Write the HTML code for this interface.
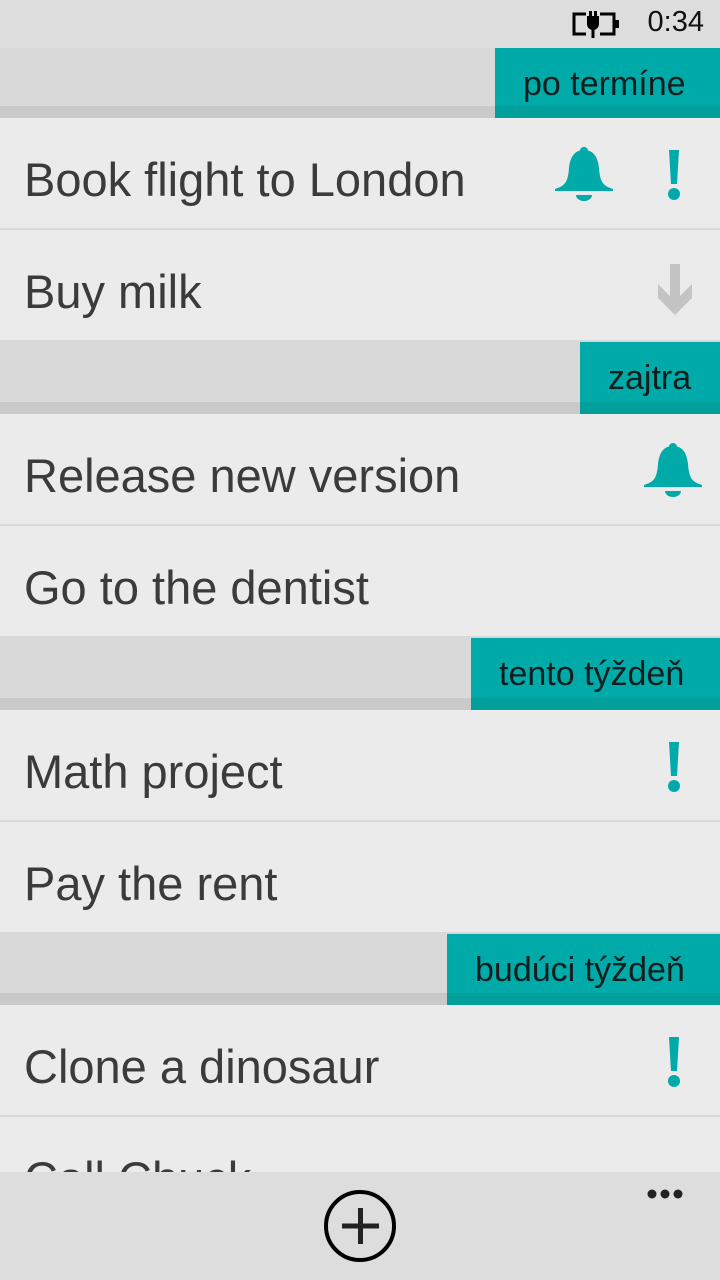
<!DOCTYPE html>
<html style="overflow:hidden;height:1280px"><head><style>
body{margin:0;width:720px;height:1280px;background:#ebebeb;position:relative;overflow:hidden;font-family:"Liberation Sans",sans-serif}
.sb{position:absolute;left:0;top:0;width:720px;height:48px;background:#dddddd}
.time{position:absolute;right:16px;top:6px;font-size:29px;color:#111}
.hdr{position:absolute;left:0;width:720px;height:72px;background:#d9d9d9}
.hdr:after{content:"";position:absolute;left:0;bottom:0;width:100%;height:12px;background:#c9c9c9}
.tag{position:absolute;right:0;top:0;height:72px;background:#00aaa8;z-index:1;color:#0e1e1e;font-size:34px;box-sizing:border-box;padding:17px 0 0 28px;white-space:nowrap}
.tag:after{content:"";position:absolute;left:0;bottom:0;width:100%;height:12px;background:#009f9a}
.it{position:absolute;left:0;width:720px;height:112px;border-bottom:2px solid #d8d8d8;box-sizing:border-box}
.it span{position:absolute;left:24px;top:34px;font-size:47px;color:#3b3b3b;white-space:nowrap}
.bar{position:absolute;left:0;top:1172px;width:720px;height:108px;background:#dddddd}
svg{position:absolute}
</style></head><body>
<div class="sb"><svg style="left:572px;top:10px" width="50" height="28" viewBox="0 0 50 28"><rect x="2" y="4" width="40" height="20" fill="none" stroke="#000" stroke-width="3"/><rect x="43" y="10" width="4" height="8" fill="#000"/><rect x="14" y="0" width="14" height="28" fill="#dddddd"/><path d="M15 6h12v8a6 6 0 0 1-12 0z" fill="#000"/><rect x="17" y="1" width="3" height="6" fill="#000"/><rect x="22" y="1" width="3" height="6" fill="#000"/><rect x="19.5" y="18" width="3" height="10" fill="#000"/></svg><div class="time">0:34</div></div>

<div class="hdr" style="top:48px;height:70px"><div class="tag" style="width:225px;height:70px">po termíne</div></div>
<div class="it" style="top:118px"><span>Book flight to London</span>
<svg style="left:554px;top:28px" width="60" height="60" viewBox="0 0 60 60"><circle cx="30" cy="5" r="4" fill="#00aaa8"/><path d="M30 4c-10 0-14 8-15 18-1 14-4 18-14 21v2h58v-2c-10-3-13-7-14-21C44 12 40 4 30 4z" fill="#00aaa8"/><path d="M22 49h16a8 6 0 0 1-16 0z" fill="#00aaa8"/></svg>
<svg style="left:664px;top:32px" width="20" height="54" viewBox="0 0 20 54"><path d="M5 0h10l-2 34h-6z" fill="#00aaa8"/><circle cx="10" cy="44" r="6" fill="#00aaa8"/></svg></div>
<div class="it" style="top:230px"><span>Buy milk</span>
<svg style="left:656px;top:34px" width="38" height="52" viewBox="0 0 38 52"><path d="M14 0h10v32l12-12v14L19 51 2 34V20l12 12z" fill="#c4c4c4"/></svg></div>

<div class="hdr" style="top:342px"><div class="tag" style="width:140px">zajtra</div></div>
<div class="it" style="top:414px"><span>Release new version</span>
<svg style="left:643px;top:28px" width="60" height="60" viewBox="0 0 60 60"><circle cx="30" cy="5" r="4" fill="#00aaa8"/><path d="M30 4c-10 0-14 8-15 18-1 14-4 18-14 21v2h58v-2c-10-3-13-7-14-21C44 12 40 4 30 4z" fill="#00aaa8"/><path d="M22 49h16a8 6 0 0 1-16 0z" fill="#00aaa8"/></svg></div>
<div class="it" style="top:526px"><span>Go to the dentist</span></div>

<div class="hdr" style="top:638px"><div class="tag" style="width:249px">tento týždeň</div></div>
<div class="it" style="top:710px"><span>Math project</span>
<svg style="left:664px;top:32px" width="20" height="54" viewBox="0 0 20 54"><path d="M5 0h10l-2 34h-6z" fill="#00aaa8"/><circle cx="10" cy="44" r="6" fill="#00aaa8"/></svg></div>
<div class="it" style="top:822px"><span>Pay the rent</span></div>

<div class="hdr" style="top:934px;height:71px"><div class="tag" style="width:273px;height:71px">budúci týždeň</div></div>
<div class="it" style="top:1005px"><span>Clone a dinosaur</span>
<svg style="left:664px;top:32px" width="20" height="54" viewBox="0 0 20 54"><path d="M5 0h10l-2 34h-6z" fill="#00aaa8"/><circle cx="10" cy="44" r="6" fill="#00aaa8"/></svg></div>
<div class="it" style="top:1117px;border:none"><span>Call Chuck</span></div>

<div class="bar">
<svg style="left:322px;top:18px" width="76" height="76" viewBox="0 0 76 76"><ellipse cx="38" cy="36" rx="34" ry="34" fill="none" stroke="#000" stroke-width="4"/><rect x="36" y="18" width="5" height="36" fill="#222"/><rect x="20" y="33.5" width="37" height="5" fill="#222"/></svg>
<svg style="left:644px;top:14px" width="44" height="16" viewBox="0 0 44 16"><circle cx="8" cy="8" r="4.5" fill="#222"/><circle cx="21" cy="8" r="4.5" fill="#222"/><circle cx="34" cy="8" r="4.5" fill="#222"/></svg>
</div>
</body></html>
